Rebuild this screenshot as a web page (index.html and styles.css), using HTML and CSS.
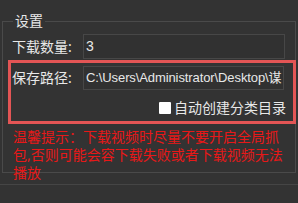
FILE: index.html
```html
<!DOCTYPE html>
<html lang="zh-CN">
<head>
<meta charset="utf-8">
<link rel="stylesheet" href="styles.css">
</head>
<body>
<fieldset class="group">
  <legend class="title">设置</legend>
  <div class="row first">
    <span class="label">下载数量:</span>
    <div class="input count">3</div>
  </div>
  <div class="mark">
    <div class="row">
      <span class="label">保存路径:</span>
      <div class="input path">C:\Users\Administrator\Desktop\谋</div>
    </div>
    <div class="check-row">
      <span class="box"></span>
      <span class="check-label">自动创建分类目录</span>
    </div>
  </div>
  <p class="warn">温馨提示：下载视频时尽量不要开启全局抓包,否则可能会容下载失败或者下载视频无法播放</p>
</fieldset>
<div class="footer"></div>
</body>
</html>
```
FILE: styles.css
```css
html, body {
  margin: 0;
  padding: 0;
  background: #333333;
  width: 298px;
  height: 203px;
  overflow: hidden;
}
body {
  font-family: "Noto Sans", "Noto Sans CJK SC", sans-serif;
  color: #e8e8e8;
  font-size: 14px;
}
.group {
  margin: 13px 2px 0 2px;
  padding: 0;
  border: 1px solid #4a4a4a;
  height: 160px;
  box-sizing: border-box;
  min-width: 0;
}
.title {
  margin-left: 10px;
  padding: 0 2px;
  font-size: 14px;
  line-height: 16px;
  color: #e8e8e8;
}
.row {
  display: flex;
  align-items: center;
}
.first {
  margin-top: 5px;
  padding-left: 9px;
}
.label {
  width: 71px;
  flex: none;
  line-height: 16px;
  white-space: nowrap;
}
.input {
  box-sizing: border-box;
  border: 1px solid #474747;
  background: #313131;
  padding-left: 2px;
  white-space: nowrap;
  overflow: hidden;
  font-family: "Liberation Sans", "Noto Sans CJK SC", sans-serif;
  font-size: 14px;
  line-height: 22px;
}
.count {
  width: 202px;
  height: 25px;
}
.mark {
  margin: 1px -1px 0 5px;
  border: 3px solid #e35555;
  height: 64px;
  box-sizing: border-box;
  padding: 3px 0 0 1px;
}
.path {
  width: 201px;
  height: 24px;
  font-size: 13px;
  letter-spacing: -0.1px;
}
.check-row {
  display: flex;
  justify-content: flex-end;
  align-items: center;
  padding-right: 7px;
  margin-top: 10px;
  gap: 3px;
}
.box {
  width: 12px;
  height: 12px;
  background: #ffffff;
  border-radius: 1px;
}
.check-label {
  line-height: 16px;
}
.warn {
  margin: 4px 0 0 0;
  padding: 0 6px 0 10px;
  color: #e81818;
  font-size: 14px;
  line-height: 18px;
}
.footer {
  margin-top: 11px;
  border-top: 1px solid #454545;
}
```
